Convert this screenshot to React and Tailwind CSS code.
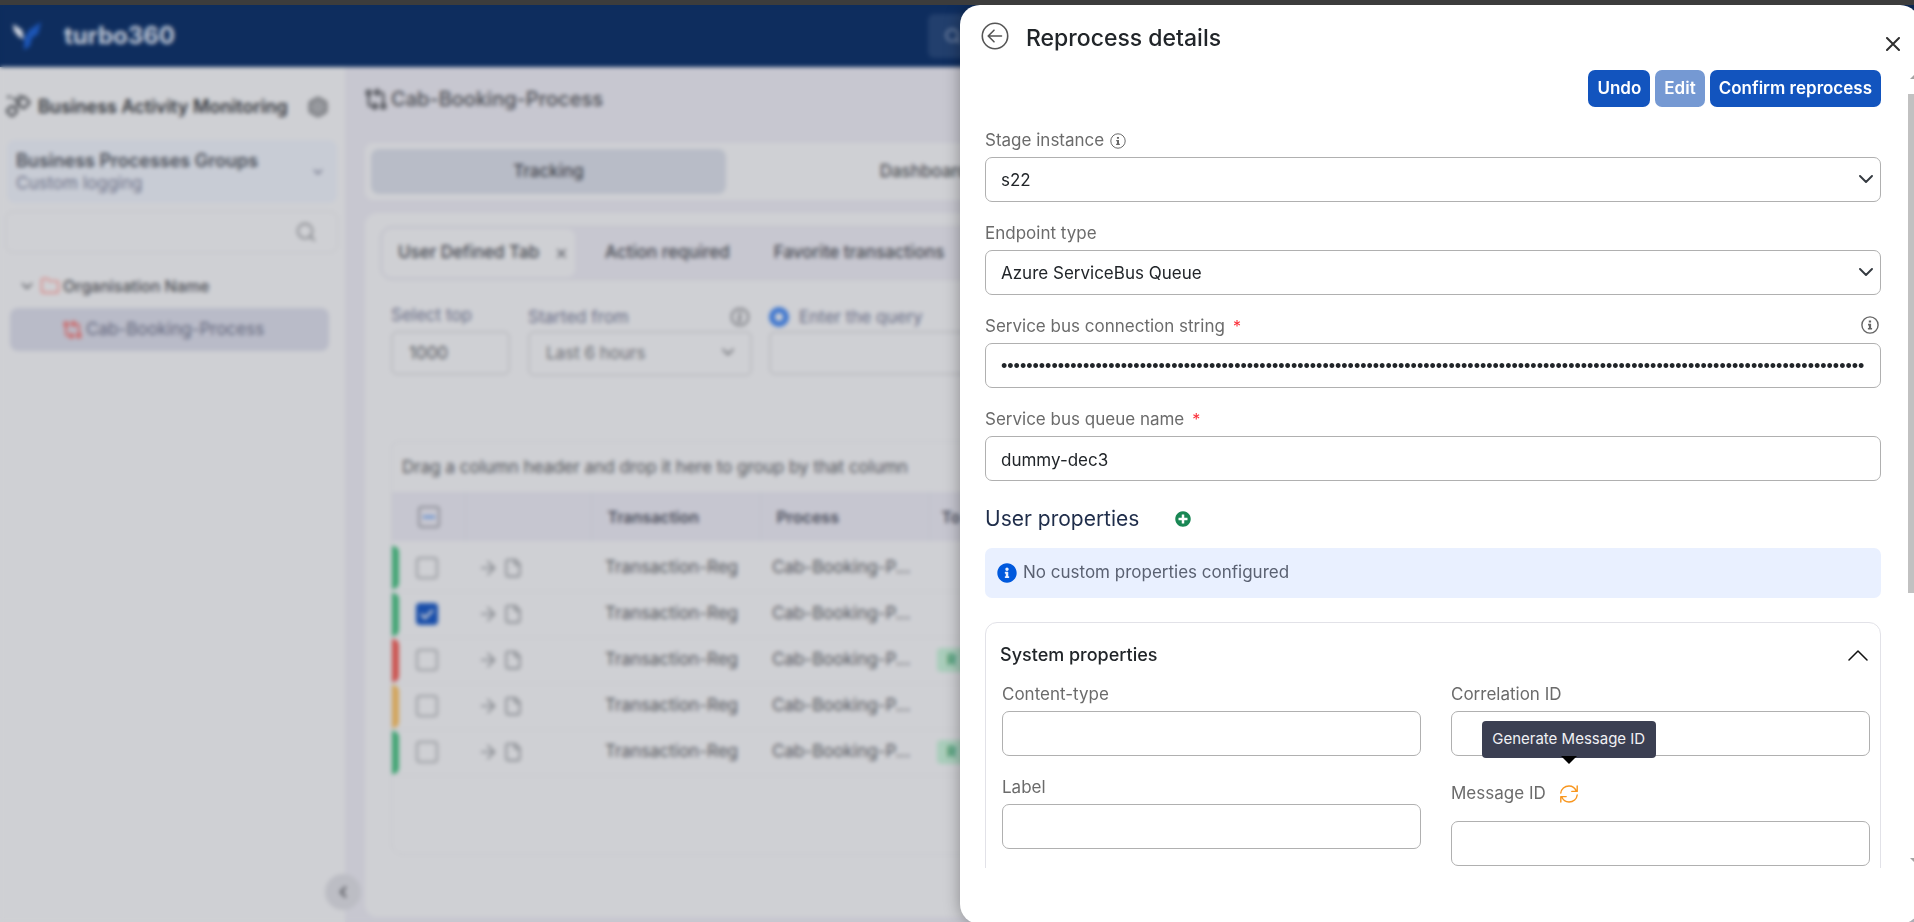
import React from "react";
import {
  ArrowRight,
  ChevronDown,
  ChevronLeft,
  File,
  Folder,
  Hexagon,
  Search,
  X,
} from "lucide-react";
import { BsInfoCircle } from "react-icons/bs";
import { FaInfoCircle, FaPlusCircle } from "react-icons/fa";

const rows = [
  { color: "bg-[#42a574]", checked: false, badge: false },
  { color: "bg-[#42a574]", checked: true, badge: false },
  { color: "bg-[#cc5450]", checked: false, badge: true },
  { color: "bg-[#d3a55c]", checked: false, badge: false },
  { color: "bg-[#42a574]", checked: false, badge: true },
];

const fieldBox =
  "block w-full h-[45px] rounded-[7px] border border-[#b0b0b0] bg-white px-[15px] pt-0.5 text-[#212529] outline-none";

function Logo() {
  return (
    <svg width="30" height="30" viewBox="0 0 30 30" aria-hidden="true">
      <path d="M1 3 L10 9 L12 18 L7 16 L2 10 Z" fill="#d3d8e2" />
      <path d="M29 1 L26 13 L20 17 L18 25 L12 29 L12 18 L17 9 Z" fill="#1c55b5" />
    </svg>
  );
}

function MonitoringIcon() {
  return (
    <svg width="28" height="26" viewBox="0 0 28 26" fill="none" stroke="#3e4147" strokeWidth="2.2" strokeLinejoin="round" aria-hidden="true">
      <rect x="15" y="4" width="9" height="9" rx="2" transform="rotate(45 19.5 8.500)" />
      <rect x="4" y="13" width="8" height="8" rx="2" transform="rotate(45 8 17)" />
      <path d="M3 3h4M9 4l5 3M12 12l3-2M14 2h3" />
    </svg>
  );
}

function ProcessIcon({ size, className }) {
  return (
    <svg width={size} height={size} viewBox="0 0 24 24" fill="none" stroke="currentColor" strokeWidth="2.4" strokeLinecap="round" strokeLinejoin="round" className={className} aria-hidden="true">
      <path d="M2 3h4v4H2zM18 18h4v4h-4z" />
      <path d="M4 8v9a3 3 0 0 0 3 3h5M10 16.500l3.500 3.500-3.500 3" />
      <path d="M20 17V8a3 3 0 0 0-3-3h-5M14 1.500L10.500 5 14 8" />
    </svg>
  );
}

function BackIcon() {
  return (
    <svg width="28" height="28" viewBox="0 0 28 28" fill="none" stroke="#555" strokeWidth="1.6" strokeLinecap="round" strokeLinejoin="round" aria-hidden="true">
      <circle cx="14" cy="14" r="12.7" />
      <path d="M20.5 14H7.5M13 8.2L7.2 14l5.8 5.8" />
    </svg>
  );
}

function InfoRing({ size, strokeWidth }) {
  return (
    <svg width={size} height={size} viewBox="0 0 18 18" aria-hidden="true">
      <circle cx="9" cy="9" r="8.1" fill="none" stroke="#666" strokeWidth={strokeWidth} />
      <path d="M7.8 4.4h2.3v2.2H7.8zM7 7.8h3.1v4.2h1v1.6H6.9v-1.6h1V9.4H7z" fill="#666" />
    </svg>
  );
}

function RefreshIcon() {
  return (
    <svg width="18" height="18" viewBox="0 0 18 18" fill="none" stroke="#f8961e" strokeWidth="1.4" strokeLinecap="round" strokeLinejoin="round" aria-hidden="true">
      <path d="M.8 8C1.200 4 4.600 1 9 1c3.200 0 6 1.800 7.400 5.200M17.200 1v5.400h-5.400" />
      <path d="M17.200 10C16.800 14 13.400 17 9 17c-3.200 0-6-1.800-7.400-5.200M.8 17v-5.400h5.400" />
    </svg>
  );
}

function SelectField({ id, label, info, value }) {
  return (
    <div>
      <div className="flex items-center gap-1.5 h-6 mb-1 text-[#6b6b6b]">
        <label htmlFor={id} className="text-[17px]">
          {label}
        </label>
        {info && <InfoRing size={16} strokeWidth={1.1} />}
      </div>
      <div className="relative">
        <select id={id} defaultValue={value} className={`${fieldBox} appearance-none text-[17px]`}>
          <option>{value}</option>
        </select>
        <svg width="14" height="8" viewBox="0 0 14 8" className="absolute right-2 top-[18px] pointer-events-none" fill="none" stroke="#343a40" strokeWidth="1.9" strokeLinecap="round" strokeLinejoin="round" aria-hidden="true">
          <path d="M1 1l6 6 6-6" />
        </svg>
      </div>
    </div>
  );
}

function TextField({ id, label, required, info, inputClass = "text-[17px]", ...props }) {
  return (
    <div>
      <div className="flex items-center justify-between h-6 mb-1">
        <label htmlFor={id} className="text-[17px] text-[#6b6b6b]">
          {label}
          {required && <span className="ml-2 text-base text-red-500">*</span>}
        </label>
        {info && (
          <span className="mr-0.5 -mt-1">
            <InfoRing size={18} strokeWidth={1.4} />
          </span>
        )}
      </div>
      <input id={id} className={`${fieldBox} ${inputClass}`} {...props} />
    </div>
  );
}

function Sidebar() {
  return (
    <aside className="w-[345px] shrink-0 bg-[#cfd0d4] pt-6">
      <div className="flex items-center h-8 pl-1 pr-4 gap-1.5">
        <MonitoringIcon />
        <h2 className="flex-1 text-lg font-semibold text-[#33363c] whitespace-nowrap">
          Business Activity Monitoring
        </h2>
        <Hexagon size={22} fill="#97999e" strokeWidth={3} className="text-[#7b7d82]" />
      </div>
      <button className="flex items-center w-[330px] h-[63px] mt-[17px] ml-[7px] pl-[9px] pr-3 rounded-lg bg-[#c8ccd5] text-left">
        <span className="flex-1">
          <span className="block text-lg leading-[22px] font-semibold text-[#484c56]">
            Business Processes Groups
          </span>
          <span className="block text-[17px] leading-[22px] text-[#6d7187]">
            Custom logging
          </span>
        </span>
        <ChevronDown size={14} strokeWidth={3} className="text-[#6d7187]" />
      </button>
      <div className="flex items-center w-[333px] h-[42px] mt-2 ml-[5px] pr-5 rounded-lg border border-[#c3c4c9]">
        <input aria-label="Search groups" className="flex-1 min-w-0 bg-transparent outline-none" />
        <Search size={22} className="text-[#85878c]" />
      </div>
      <div className="flex items-center h-[42px] mt-3 pl-[18px] text-base font-medium text-[#4a4c52]">
        <ChevronDown size={18} />
        <Folder size={20} className="ml-1 mr-[3px] text-[#d98583]" />
        Organisation Name
      </div>
      <a href="#process" className="flex items-center w-[319px] h-[43px] mt-px ml-2.5 pl-[53px] gap-1 rounded-lg bg-[#b9bbc8] text-[17px] text-[#60647a]">
        <ProcessIcon size={19} className="text-[#cf5f5e]" />
        Cab-Booking-Process
      </a>
    </aside>
  );
}

function TransactionTable() {
  return (
    <div className="h-[414px] mt-[65px] rounded-t-lg rounded-b-xl border border-[#c6c7cc]">
      <p className="h-[50px] pl-2.5 leading-[50px] text-[17px] text-[#53555b] whitespace-nowrap">
        Drag a column header and drop it here to group by that column
      </p>
      <table className="w-full table-fixed text-left text-[17px]">
        <colgroup>
          <col className="w-[73px]" />
          <col className="w-[126px]" />
          <col className="w-[169px]" />
          <col className="w-[169px]" />
          <col />
        </colgroup>
        <thead>
          <tr className="h-[49px] bg-[#c6c6d0] text-base text-[#474a58]">
            <th className="pl-[26px] border-r border-[#bfc0ca]">
              <span className="flex items-center justify-center w-[22px] h-[22px] rounded border-2 border-[#8d8f97]">
                <span className="w-3 h-0.5 bg-[#4a82d0]" />
              </span>
            </th>
            <th className="border-r border-[#bfc0ca]" />
            <th className="pl-4 font-semibold border-r border-[#bfc0ca]">Transaction</th>
            <th className="pl-4 font-semibold border-r border-[#bfc0ca]">Process</th>
            <th className="pl-3 font-semibold">To</th>
          </tr>
        </thead>
        <tbody className="before:block before:h-1">
          {rows.map((r, i) => (
            <tr key={i} className="h-[46px] border-b border-[#c8c9cd] text-[#54565c]">
              <td>
                <div className="flex items-center">
                  <span className={`w-[7px] h-[43px] mr-[17px] rounded-r-md ${r.color}`} />
                  <span
                    className={`grid place-items-center w-[22px] h-[22px] rounded ${r.checked ? "bg-[#1a4faa]" : "border-2 border-[#9b9da2]"}`}
                  >
                    {r.checked && (
                      <svg width="16" height="12" viewBox="0 0 16 12" fill="none" stroke="#cfd0d4" strokeWidth="2.400" aria-hidden="true">
                        <path d="M2 6l4 4 8-8" />
                      </svg>
                    )}
                  </span>
                </div>
              </td>
              <td>
                <div className="flex items-center gap-1 pl-3 text-[#7d8086]">
                  <ArrowRight size={22} strokeWidth={1.7} />
                  <File size={20} strokeWidth={1.9} />
                </div>
              </td>
              <td className="pl-3.5">Transaction-Reg</td>
              <td className="pl-3">Cab-Booking-P...</td>
              <td className="pl-2">
                {r.badge && (
                  <span className="inline-block h-6 px-2.5 rounded bg-[#a9cdbb] text-sm leading-6 font-bold text-[#3b9468]">
                    R
                  </span>
                )}
              </td>
            </tr>
          ))}
        </tbody>
      </table>
    </div>
  );
}

function Content() {
  return (
    <main className="flex-1 min-w-0 flex flex-col pl-5 pb-[5px] bg-[#c7c7d0]">
      <h1 className="flex items-center gap-1 h-16 text-xl font-medium text-[#4a4c52]">
        <ProcessIcon size={22} />
        Cab-Booking-Process
      </h1>
      <nav className="flex h-[57px] mt-3 p-[6px] rounded-l-lg bg-[#cfd0d4] text-[17px] font-medium text-[#3f424a]">
        <button className="w-[355px] rounded-lg bg-[#b8bcc7]">Tracking</button>
        <button className="w-[396px] text-[#4a4c52]">Dashboard</button>
      </nav>
      <section className="flex-1 mt-[13px] pt-[13px] pl-[15px] rounded-l-xl bg-[#cfd0d4]">
        <div className="flex items-center h-[54px] p-0.5 rounded-l-xl border border-[#c0c1c8] bg-[#c7c7d0] text-[17px] font-medium text-[#43464e] whitespace-nowrap">
          <button className="flex items-center h-full w-[192px] pl-[15px] pr-1.5 justify-between rounded-lg bg-[#cfd0d4]">
            User Defined Tab
            <X size={15} />
          </button>
          <button className="ml-[30px]">Action required</button>
          <button className="ml-[44px]">Favorite transactions</button>
        </div>
        <div className="pl-[11px]">
          <div className="flex mt-[23px] text-[17px] text-[#676c85] whitespace-nowrap">
            <div className="w-[119px]">
              <label htmlFor="top" className="block h-7 leading-6">Select top</label>
              <input id="top" defaultValue="1000" className="w-full h-[44px] px-4 rounded-md border-2 border-[#bdbec3] text-[#54565c]" />
            </div>
            <div className="w-[224px] ml-[18px]">
              <div className="flex items-center justify-between h-7 leading-6">
                <label htmlFor="from">Started from</label>
                <BsInfoCircle size={18} strokeWidth={0.6} className="mr-[3px] text-[#6b6d73]" />
              </div>
              <div className="relative">
                <select id="from" className="appearance-none w-full h-[45px] px-4 rounded-md border-2 border-[#bdbec3] text-[#6a6c72]">
                  <option>Last 6 hours</option>
                </select>
                <ChevronDown size={20} className="absolute right-3.5 top-[11px] text-[#5d5f65]" />
              </div>
            </div>
            <div className="flex-1 ml-[17px]">
              <label className="flex items-center gap-2.5 h-7 leading-6">
                <input type="radio" name="mode" defaultChecked className="appearance-none w-5 h-5 rounded-full border-[6px] border-[#3f77cf]" />
                Enter the query
              </label>
              <input aria-label="Query" className="w-full h-[44px] rounded-md border-2 border-[#bdbec3]" />
            </div>
          </div>
          <TransactionTable />
        </div>
      </section>
    </main>
  );
}

function ReprocessDrawer() {
  return (
    <div
      role="dialog"
      aria-label="Reprocess details"
      className="absolute top-0 -right-1.5 -bottom-0.5 w-[960px] rounded-[20px] bg-white shadow-[0_0_16px_rgba(0,0,0,0.35)]"
    >
      <div className="flex items-center h-[65px] pl-[21px] pr-5">
        <button aria-label="Back" className="-mt-1">
          <BackIcon />
        </button>
        <h2 className="flex-1 ml-[17px] text-[23px] leading-7 font-medium text-[#212529]">
          Reprocess details
        </h2>
        <button aria-label="Close" className="mt-3">
          <svg width="14" height="14" viewBox="0 0 14 14" stroke="#2f2f2f" strokeWidth="2" strokeLinecap="round" aria-hidden="true">
            <path d="M1 1l12 12M13 1L1 13" />
          </svg>
        </button>
      </div>

      {/* Scrolling body */}
      <div className="flex h-[798px] overflow-hidden">
        <div className="flex-1 pl-[25px] pr-[27px]">
          <div className="flex justify-end gap-[5px] text-[17px] font-semibold text-white">
            <button className="h-[37px] px-[9px] rounded-[7px] bg-[#1254be]">Undo</button>
            <button className="h-[37px] px-[9px] rounded-[7px] bg-[#7599d3]" disabled>
              Edit
            </button>
            <button className="h-[37px] px-[9px] rounded-[7px] bg-[#1254be]">
              Confirm reprocess
            </button>
          </div>

          <div className="flex flex-col gap-5 mt-[22px]">
            <SelectField id="stage" label="Stage instance" info value="s22" />
            <SelectField id="endpoint" label="Endpoint type" value="Azure ServiceBus Queue" />
            <TextField
              id="connection"
              label="Service bus connection string"
              required
              info
              type="password"
              inputClass="text-lg font-['Liberation_Sans',sans-serif]"
              defaultValue={"x".repeat(150)}
            />
            <TextField id="queue" label="Service bus queue name" required defaultValue="dummy-dec3" />
          </div>

          <div className="flex items-center h-7 mt-6 gap-9">
            <h3 className="text-[21px] text-[#1f2d4a]">User properties</h3>
            <button aria-label="Add property">
              <FaPlusCircle size={16} className="text-[#198754]" />
            </button>
          </div>
          <div className="flex items-center gap-1.5 h-[50px] mt-[15px] px-3 rounded-[7px] bg-[#e9f0ff] text-[17px] text-[#5a6172]">
            <FaInfoCircle size={20} className="text-[#0059dd]" />
            No custom properties configured
          </div>

          {/* System properties */}
          <section className="h-[420px] mt-6 pl-4 pr-2.5 rounded-xl border border-[#e2e2e8]">
            <div className="flex items-center justify-between h-[60px] pt-1 pr-0.5 -ml-0.5">
              <h3 className="text-lg font-medium text-[#212529]">System properties</h3>
              <button aria-label="Collapse">
                <svg width="20" height="11" viewBox="0 0 20 11" fill="none" stroke="#111" strokeWidth="1.5" strokeLinecap="round" strokeLinejoin="round" aria-hidden="true">
                  <path d="M1 10l9-9 9 9" />
                </svg>
              </button>
            </div>
            <div className="grid grid-cols-2 gap-x-[30px]">
              <div className="flex flex-col gap-5">
                <TextField id="content-type" label="Content-type" />
                <TextField id="label" label="Label" />
              </div>
              <div className="flex flex-col gap-5">
                <TextField id="correlation" label="Correlation ID" />
                <div>
                  <div className="flex items-center gap-3.5 h-9 mb-[9px]">
                    <label htmlFor="message" className="text-[17px] text-[#6b6b6b]">
                      Message ID
                    </label>
                    <button aria-label="Generate Message ID" className="relative">
                      <RefreshIcon />
                      <span className="absolute bottom-[45px] left-1/2 -translate-x-1/2 flex items-center justify-center w-[174px] h-[37px] rounded bg-[#3b3f52] text-[15px] text-[#f1f1f4] whitespace-nowrap">
                        Generate Message ID
                        <span className="absolute top-[35px] left-1/2 -translate-x-1/2 border-x-8 border-t-8 border-x-transparent border-t-black" />
                      </span>
                    </button>
                  </div>
                  <input id="message" className={`${fieldBox} text-[17px]`} />
                </div>
              </div>
            </div>
          </section>
        </div>

        {/* Scroll bar */}
        <div className="w-3 flex flex-col justify-between items-center pt-[5px] pb-1.5">
          <div className="flex flex-col items-center gap-[15px] w-full">
            <span className="border-x-4 border-b-4 border-x-transparent border-b-[#a3a3a3]" />
            <span className="w-full h-[499px] bg-[#c1c1c1]" />
          </div>
          <span className="border-x-4 border-t-4 border-x-transparent border-t-[#a3a3a3]" />
        </div>
      </div>
    </div>
  );
}

export default function App() {
  return (
    <div className="h-screen flex flex-col overflow-hidden bg-[#c7c7d0] font-['Inter',sans-serif]">
      <div className="h-[5px] shrink-0 bg-[#3c3c3c]" />
      <div className="relative flex-1 min-h-0 flex flex-col overflow-hidden">
        <header className="flex items-center h-[62px] shrink-0 pl-3 bg-[#0e2d5e]">
          <Logo />
          <span className="ml-[22px] text-2xl font-bold text-[#c3cbd9]">turbo360</span>
          <div className="flex items-center w-[500px] h-[44px] ml-auto mr-[486px] pl-4 rounded-md bg-[#223f6d]">
            <Search size={18} className="text-[#8c9bb5]" />
          </div>
        </header>
        <div className="relative flex-1 flex">
          <Sidebar />
          <Content />
          <button aria-label="Collapse sidebar" className="absolute left-[325px] bottom-3 grid place-items-center w-9 h-9 rounded-full bg-[#bcbdc4]">
            <ChevronLeft size={18} strokeWidth={3} className="text-[#55575d]" />
          </button>
        </div>

        <div className="absolute inset-0 backdrop-blur-[2px]" />
        <ReprocessDrawer />
      </div>
    </div>
  );
}
